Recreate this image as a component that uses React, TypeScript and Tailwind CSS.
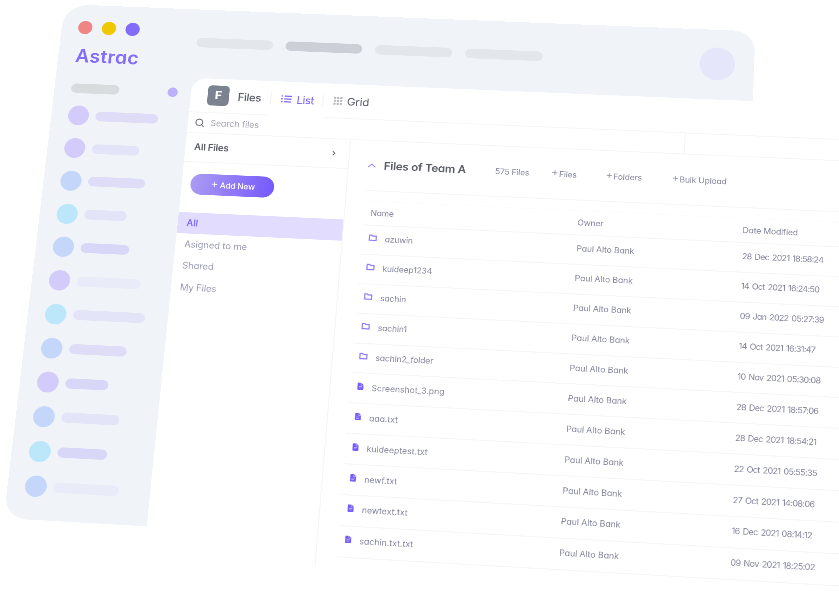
import React from "react";

type Row = { name: string; kind: "folder" | "file"; date: string };

const rows: Row[] = [
  { name: "azuwin", kind: "folder", date: "28 Dec 2021 18:58:24" },
  { name: "kuldeep1234", kind: "folder", date: "14 Oct 2021 16:24:50" },
  { name: "sachin", kind: "folder", date: "09 Jan 2022 05:27:39" },
  { name: "sachin1", kind: "folder", date: "14 Oct 2021 16:31:47" },
  { name: "sachin2_folder", kind: "folder", date: "10 Nov 2021 05:30:08" },
  { name: "Screenshot_3.png", kind: "file", date: "28 Dec 2021 18:57:06" },
  { name: "aaa.txt", kind: "file", date: "28 Dec 2021 18:54:21" },
  { name: "kuldeeptest.txt", kind: "file", date: "22 Oct 2021 05:55:35" },
  { name: "newf.txt", kind: "file", date: "27 Oct 2021 14:08:06" },
  { name: "newtext.txt", kind: "file", date: "16 Dec 2021 08:14:12" },
  { name: "sachin.txt.txt", kind: "file", date: "09 Nov 2021 18:25:02" },
];

const sidebarItems = [
  { dot: "bg-[#d3cbfa]", bar: "w-[123px] bg-[#dedcf6]" },
  { dot: "bg-[#d3cbfa]", bar: "w-[93px] bg-[#e4e4f8]" },
  { dot: "bg-[#c4d7fb]", bar: "w-[111px] bg-[#dedcf6]" },
  { dot: "bg-[#bce7fb]", bar: "w-[82px] bg-[#e4e4f8]" },
  { dot: "bg-[#c4d7fb]", bar: "w-[94px] bg-[#d9d7f8]" },
  { dot: "bg-[#d3cbfa]", bar: "w-[123px] bg-[#eaebf9]" },
  { dot: "bg-[#bce7fb]", bar: "w-[138px] bg-[#e4e4f8]" },
  { dot: "bg-[#c4d7fb]", bar: "w-[110px] bg-[#dedcf6]" },
  { dot: "bg-[#d3cbfa]", bar: "w-[82px] bg-[#d9d7f8]" },
  { dot: "bg-[#c4d7fb]", bar: "w-[110px] bg-[#e4e4f8]" },
  { dot: "bg-[#bce7fb]", bar: "w-[94px] bg-[#d9d7f8]" },
  { dot: "bg-[#c4d7fb]", bar: "w-[123px] bg-[#eaebf9]" },
];

function FolderIcon() {
  return (
    <svg viewBox="0 0 16 14" className="h-[14px] w-[16px]" fill="none" stroke="#8f7afb" strokeWidth="2.2">
      <path d="M1.5 1.8h4.6l1.6 1.8h6.8v8.6h-13z" />
    </svg>
  );
}

function FileIcon() {
  return (
    <svg viewBox="0 0 12 14" className="ml-[1px] h-[14px] w-[12px]">
      <path d="M1.5 0H7.5L11.5 4V12.6Q11.5 14 10 14H2Q.5 14 .5 12.6V1.2Q.5 0 1.5 0Z" fill="#765cfb" />
      <path d="M7 .8V4.6H11M3 7.6H9M3 10.4H7.5" stroke="#c4b9ff" strokeWidth="1.2" fill="none" />
    </svg>
  );
}

function Header() {
  return (
    <header className="flex h-[145px] w-[1350px] rounded-tl-[48px] rounded-tr-[42px] bg-[#f0f4f9]">
      <div className="w-[270px] shrink-0 pl-[33px] pt-[34px]">
        <div className="flex gap-[19px]">
          <span className="size-[28px] rounded-full bg-[#ef8585]" />
          <span className="size-[28px] rounded-full bg-[#efc800]" />
          <span className="size-[28px] rounded-full bg-[#846cfb]" />
        </div>
        <div className="ml-[1px] mt-[26px] text-[38px] font-semibold leading-[40px] tracking-[0.7px] text-[#846cfb]">
          Astrac
        </div>
      </div>
      <nav className="flex gap-[25px] pt-[60px]">
        <span className="h-[20px] w-[150px] rounded-full bg-[#e3e6eb]" />
        <span className="h-[20px] w-[150px] rounded-full bg-[#cccfd5]" />
        <span className="h-[20px] w-[150px] rounded-full bg-[#e3e6eb]" />
        <span className="h-[20px] w-[150px] rounded-full bg-[#e3e6eb]" />
      </nav>
      <span className="ml-auto mr-[36px] mt-[37px] size-[68px] rounded-full bg-[#e5e6f9]" />
    </header>
  );
}

function Sidebar() {
  return (
    <aside className="h-[898px] w-[269px] shrink-0 rounded-bl-[42px] bg-[#f0f4f9] pt-[21px]">
      <div className="flex h-[21px] items-center justify-between pl-[33px] pr-[26px]">
        <span className="h-[20px] w-[95px] rounded-full bg-[#d8dcdf]" />
        <span className="size-[20px] rounded-full bg-[#bbb0fa]" />
      </div>
      <ul className="mt-[13px]">
        {sidebarItems.map((item, i) => (
          <li key={i} className="flex h-[67.74px] items-center gap-[13px] pl-[33px]">
            <span className={`size-[41px] rounded-full ${item.dot}`} />
            <span className={`h-[20px] rounded-full ${item.bar}`} />
          </li>
        ))}
      </ul>
    </aside>
  );
}

function Tabs() {
  return (
    <div className="flex h-[72px] text-[#5b5e66]">
      <div className="flex w-[156px] items-center border-b-2 border-[#f6f6f9] pl-[33px]">
        <span className="mb-px flex size-[42px] items-center justify-center rounded-[8px] bg-[#7b8290] text-[23px] font-extrabold text-white">
          F
        </span>
        <span className="ml-[17px] mt-[3px] text-[22px] font-medium tracking-[-0.6px]">Files</span>
      </div>
      <div className="flex w-[103px] items-center text-[#7b61ff]">
        <span className="h-[24px] w-[2px] bg-[#f3f3f7]" />
        <svg viewBox="0 0 20 16" className="ml-[19px] h-[16px] w-[20px]" stroke="currentColor" strokeWidth="2.4">
          <path d="M0 2h3M6 2h14M0 8h3M6 8h14M0 14h3M6 14h14" />
        </svg>
        <span className="ml-[10px] mt-[2px] w-[35px] text-[22px] tracking-[-0.7px]">List</span>
        <span className="ml-auto h-[24px] w-[2px] bg-[#f3f3f7]" />
      </div>
      <div className="flex flex-1 items-center border-b-2 border-[#f6f6f9] pl-[20px]">
        <svg viewBox="0 0 17 17" className="size-[17px]" fill="#b9bac2">
          {[0, 6.2, 12.4].map((y) =>
            [0, 6.2, 12.4].map((x) => <rect key={`${x}-${y}`} x={x} y={y} width="4.4" height="4.4" rx="1" />),
          )}
        </svg>
        <span className="ml-[9px] mt-[3px] text-[22px] tracking-[-0.2px]">Grid</span>
      </div>
    </div>
  );
}

function SearchBar() {
  return (
    <div className="flex h-[43px] items-center border-b-2 border-[#f6f6f9]">
      <div className="flex w-[955px] items-center pl-[14px]">
        <svg viewBox="0 0 18 18" className="size-[18px]" fill="none" stroke="#6b6d75" strokeWidth="2">
          <circle cx="8" cy="8" r="6.6" />
          <path d="M12.8 12.8L17 17" />
        </svg>
        <span className="ml-[12px] mt-[2px] text-[17px] tracking-[-0.1px] text-[#a0a1af]">Search files</span>
      </div>
      <span className="h-[43px] w-[2px] bg-[#f5f5f9]" />
    </div>
  );
}

function FileNav() {
  return (
    <div className="h-[838px] w-[319px] shrink-0 border-r-2 border-[#f5f5f9]">
      <div className="flex h-[60px] items-center justify-between border-b-2 border-[#f6f6f9] pl-[17px] pr-[25px] text-[#5b5e66]">
        <span className="text-[18.5px] font-semibold tracking-[-0.3px]">All Files</span>
        <svg viewBox="0 0 8 12" className="h-[10px] w-[8px]" fill="none" stroke="currentColor" strokeWidth="2">
          <path d="M1.5 1L6.5 6L1.5 11" />
        </svg>
      </div>
      <div className="ml-[17px] mt-[23px] flex h-[43px] w-[162px] items-center rounded-full bg-linear-[100deg] from-[#ac9cf2] to-[#7558fd] pl-[41px] text-[16px] font-medium text-white">
        <svg viewBox="0 0 12 12" className="mb-[3px] size-[11px]" stroke="white" strokeWidth="1.4">
          <path d="M6 0V12M0 6H12" />
        </svg>
        <span className="ml-[5px] tracking-[-0.3px]">Add New</span>
      </div>
      <ul className="mt-[37px] text-[18px] leading-[43px] tracking-[-0.15px] text-[#9c9db4]">
        <li className="h-[43px] bg-[#e2dcfe] pl-[17px] font-semibold text-[#8068f8]">All</li>
        <li className="h-[43.3px] pl-[17px]">Asigned to me</li>
        <li className="h-[43.3px] pl-[17px]">Shared</li>
        <li className="h-[43.3px] pl-[17px]">My Files</li>
      </ul>
    </div>
  );
}

function Action({ label, className }: { label: string; className: string }) {
  return (
    <span className={`flex shrink-0 items-center gap-[3px] ${className}`}>
      <svg viewBox="0 0 10 10" className="mb-[3px] size-[10px]" stroke="currentColor" strokeWidth="1.3">
        <path d="M5 0V10M0 5H10" />
      </svg>
      {label}
    </span>
  );
}

function FileTable() {
  return (
    <section className="ml-[36px] flex-1 text-[16px] tracking-[-0.3px] text-[#85869c]">
      <div className="flex h-[103px] items-center border-b-2 border-[#f6f6f9]">
        <svg viewBox="0 0 16 9" className="h-[9px] w-[16px]" fill="none" stroke="#9a86fb" strokeWidth="1.8">
          <path d="M1 8L8 1.4L15 8" />
        </svg>
        <h1 className="ml-[15px] w-[213px] text-[22px] font-semibold tracking-[-0.4px] text-[#5b5e66]">
          Files of Team A
        </h1>
        <span className="w-[109px]">575 Files</span>
        <Action label="Files" className="w-[103px]" />
        <Action label="Folders" className="w-[125px]" />
        <Action label="Bulk Upload" className="w-[125px]" />
      </div>
      <div className="mt-[20px] flex h-[50px] items-center border-b-2 border-t border-b-[#f6f6f9] border-t-[#fbfbfd] pb-[1px] pl-[13px]">
        <span className="w-[393px]">Name</span>
        <span className="w-[310px]">Owner</span>
        <span>Date Modified</span>
      </div>
      {rows.map((row) => (
        <div key={row.name} className="flex h-[58.9px] items-center border-b-2 border-[#f6f6fa] pb-[4px] pl-[13px]">
          <span className="mb-[4px] flex w-[28px]">{row.kind === "folder" ? <FolderIcon /> : <FileIcon />}</span>
          <span
            className={
              row.kind === "folder" ? "w-[366px] pl-[3px] tracking-[-0.2px]" : "w-[366px] tracking-[0.05px]"
            }
          >
            {row.name}
          </span>
          <span className="w-[310px] tracking-[-0.15px]">Paul Alto Bank</span>
          <span className="tracking-[-0.95px] [word-spacing:1.8px]">{row.date}</span>
        </div>
      ))}
    </section>
  );
}

export default function App() {
  return (
    <div className="h-[597px] w-[839px] overflow-hidden bg-white">
      <div className="w-[1640px] origin-top-left whitespace-nowrap font-[Inter,sans-serif] [font-feature-settings:'cv11'] [transform:matrix3d(0.49892,0.01958,0,-0.000017145,-0.058365,0.464775,0,-0.000054045,0,0,1,0,64.4,4.2,0,1)]">
        <Header />
        <div className="flex">
          <Sidebar />
          <div className="relative flex-1 before:absolute before:left-0 before:top-0 before:size-[28px] before:bg-[#f0f4f9]">
            <main className="relative rounded-tl-[28px] bg-white">
              <Tabs />
              <SearchBar />
              <div className="flex">
                <FileNav />
                <FileTable />
              </div>
            </main>
          </div>
        </div>
      </div>
    </div>
  );
}
